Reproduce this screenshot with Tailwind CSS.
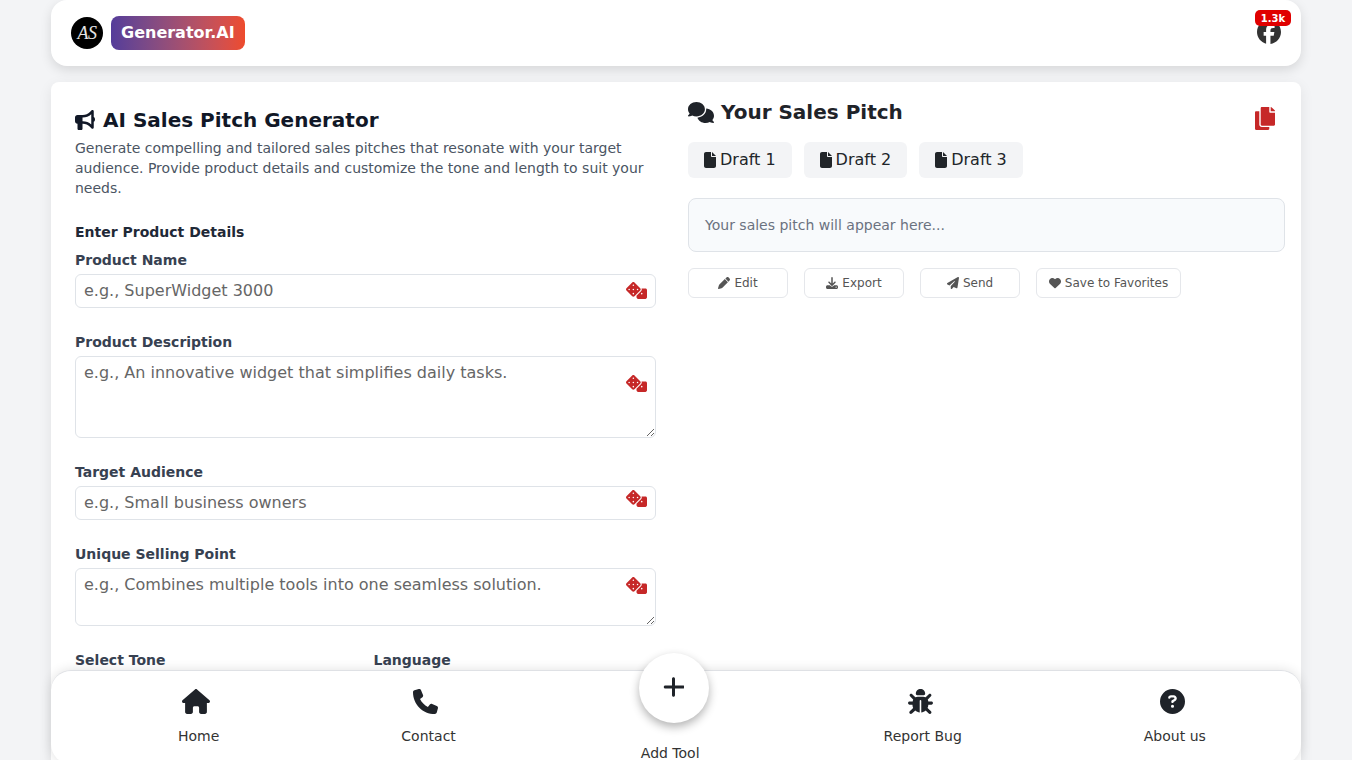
<!DOCTYPE html>
<html lang="en">
<head>
    <meta charset="UTF-8">
    <meta name="viewport" content="width=device-width, initial-scale=1.0">
    <title>AI Sales Pitch Generator</title>
    <script src="https://cdn.jsdelivr.net/npm/@tailwindcss/browser@4"></script>
</head>
<body class="bg-[#f3f4f6] font-['DejaVu_Sans',sans-serif] h-screen overflow-hidden relative">

    <!-- Header -->
    <header class="mx-[51px] h-[66px] bg-white rounded-2xl shadow-[0_4px_12px_rgba(0,0,0,0.12)] flex items-center justify-between pl-5 pr-2.5">
        <div class="flex items-center gap-2">
            <div class="w-8 h-8 rounded-full bg-black flex items-center justify-center text-white/90 italic text-[18px] tracking-tight font-['Liberation_Serif',serif]">AS</div>
            <div class="h-[34px] px-2.5 rounded-lg bg-gradient-to-r from-[#553c9a] to-[#ee4b2b] flex items-center text-white font-bold text-[16px]">Generator.AI</div>
        </div>
        <div class="relative w-9 h-6">
            <svg class="w-6 h-6 text-[#333] ml-[2px] -mt-px" viewBox="0 0 512 512" fill="currentColor"><path d="M512 256C512 114.6 397.4 0 256 0S0 114.6 0 256C0 376 82.7 476.8 194.2 504.5V334.2H141.4V256h52.8V222.3c0-87.1 39.4-127.5 125-127.5c16.2 0 44.2 3.2 55.7 6.4V172c-6-.6-16.5-1-29.6-1c-42 0-58.2 15.9-58.2 57.2V256h83.6l-14.4 78.2H287V510.1C413.8 494.8 512 386.9 512 256h0z"/></svg>
            <span class="absolute left-0 top-[-11px] w-9 h-4 rounded-[5px] bg-[#e00000] text-white text-[10px] font-bold flex items-center justify-center">1.3k</span>
        </div>
    </header>

    <!-- Main card -->
    <main class="mx-[51px] mt-4 h-[900px] bg-white rounded-lg shadow-[0_4px_14px_rgba(0,0,0,0.08)] p-6 grid grid-cols-[581px_597px] gap-x-8 items-start">
        <section>
            <h1 class="flex items-center gap-2 text-xl leading-7 font-bold text-[#111827] mb-1">
                <svg class="w-5 h-5" viewBox="0 0 512 512" fill="currentColor"><path d="M480 32c0-12.9-7.8-24.6-19.8-29.6s-25.7-2.2-34.9 6.9L381.7 53c-48 48-113.1 75-181 75H192 160 64c-35.3 0-64 28.7-64 64v96c0 35.3 28.7 64 64 64l0 128c0 17.7 14.3 32 32 32h64c17.7 0 32-14.3 32-32V352h8.7c67.9 0 133 27 181 75l43.6 43.6c9.2 9.2 22.9 11.9 34.9 6.9s19.8-16.6 19.8-29.6V300.4c18.6-8.8 32-32.5 32-60.4s-13.4-51.6-32-60.4V32zm-64 76.7V240 371.3C357.2 317.8 280.5 288 200.7 288H192V192h8.7c79.8 0 156.5-29.8 215.3-83.3z"/></svg>
                AI Sales Pitch Generator
            </h1>
            <p class="text-sm leading-5 text-[#4b5563] mb-6">Generate compelling and tailored sales pitches that resonate with your target audience. Provide product details and customize the tone and length to suit your needs.</p>

            <h2 class="text-sm leading-5 font-bold text-[#1f2937] mb-2">Enter Product Details</h2>

            <div class="mb-6">
                <label class="block text-sm leading-5 font-bold text-[#374151] mb-1">Product Name</label>
                <div class="relative">
                    <input type="text" placeholder="e.g., SuperWidget 3000" class="block w-full h-[34px] px-2 pb-0.5 text-base border border-[#dfe3e8] rounded-md placeholder:text-[#666]">
                    <svg class="absolute right-[9px] top-[8px] w-[21px] h-[17px] text-[#c62828]" viewBox="0 0 640 512" fill="currentColor"><path d="M592 192H473.26c12.69 29.59 7.12 65.2-17 89.32L320 417.58V464c0 26.51 21.49 48 48 48h224c26.51 0 48-21.49 48-48V240c0-26.51-21.49-48-48-48zM480 376c-13.25 0-24-10.75-24-24 0-13.26 10.75-24 24-24s24 10.74 24 24c0 13.25-10.75 24-24 24zm-46.37-186.7L258.7 14.37c-19.16-19.16-50.23-19.16-69.39 0L14.37 189.3c-19.16 19.16-19.16 50.23 0 69.39L189.3 433.63c19.16 19.16 50.23 19.16 69.39 0L433.63 258.7c19.17-19.17 19.17-50.24 0-69.4zM96 248c-13.25 0-24-10.75-24-24 0-13.26 10.75-24 24-24s24 10.74 24 24c0 13.25-10.75 24-24 24zm128 128c-13.25 0-24-10.75-24-24 0-13.26 10.75-24 24-24s24 10.74 24 24c0 13.25-10.75 24-24 24zm0-128c-13.25 0-24-10.75-24-24 0-13.26 10.75-24 24-24s24 10.74 24 24c0 13.25-10.75 24-24 24zm0-128c-13.25 0-24-10.75-24-24 0-13.26 10.75-24 24-24s24 10.74 24 24c0 13.25-10.75 24-24 24zm128 128c-13.25 0-24-10.75-24-24 0-13.26 10.75-24 24-24s24 10.74 24 24c0 13.25-10.75 24-24 24z"/></svg>
                </div>
            </div>

            <div class="mb-6">
                <label class="block text-sm leading-5 font-bold text-[#374151] mb-1">Product Description</label>
                <div class="relative">
                    <textarea placeholder="e.g., An innovative widget that simplifies daily tasks." class="block w-full h-[82px] px-2 py-1 text-base border border-[#dfe3e8] rounded-md placeholder:text-[#666]"></textarea>
                    <svg class="absolute right-[9px] top-[19px] w-[21px] h-[17px] text-[#c62828]" viewBox="0 0 640 512" fill="currentColor"><path d="M592 192H473.26c12.69 29.59 7.12 65.2-17 89.32L320 417.58V464c0 26.51 21.49 48 48 48h224c26.51 0 48-21.49 48-48V240c0-26.51-21.49-48-48-48zM480 376c-13.25 0-24-10.75-24-24 0-13.26 10.75-24 24-24s24 10.74 24 24c0 13.25-10.75 24-24 24zm-46.37-186.7L258.7 14.37c-19.16-19.16-50.23-19.16-69.39 0L14.37 189.3c-19.16 19.16-19.16 50.23 0 69.39L189.3 433.63c19.16 19.16 50.23 19.16 69.39 0L433.63 258.7c19.17-19.17 19.17-50.24 0-69.4zM96 248c-13.25 0-24-10.75-24-24 0-13.26 10.75-24 24-24s24 10.74 24 24c0 13.25-10.75 24-24 24zm128 128c-13.25 0-24-10.75-24-24 0-13.26 10.75-24 24-24s24 10.74 24 24c0 13.25-10.75 24-24 24zm0-128c-13.25 0-24-10.75-24-24 0-13.26 10.75-24 24-24s24 10.74 24 24c0 13.25-10.75 24-24 24zm0-128c-13.25 0-24-10.75-24-24 0-13.26 10.75-24 24-24s24 10.74 24 24c0 13.25-10.75 24-24 24zm128 128c-13.25 0-24-10.75-24-24 0-13.26 10.75-24 24-24s24 10.74 24 24c0 13.25-10.75 24-24 24z"/></svg>
                </div>
            </div>

            <div class="mb-6">
                <label class="block text-sm leading-5 font-bold text-[#374151] mb-1">Target Audience</label>
                <div class="relative">
                    <input type="text" placeholder="e.g., Small business owners" class="block w-full h-[34px] px-2 pb-0.5 text-base border border-[#dfe3e8] rounded-md placeholder:text-[#666]">
                    <svg class="absolute right-[9px] top-[4px] w-[21px] h-[17px] text-[#c62828]" viewBox="0 0 640 512" fill="currentColor"><path d="M592 192H473.26c12.69 29.59 7.12 65.2-17 89.32L320 417.58V464c0 26.51 21.49 48 48 48h224c26.51 0 48-21.49 48-48V240c0-26.51-21.49-48-48-48zM480 376c-13.25 0-24-10.75-24-24 0-13.26 10.75-24 24-24s24 10.74 24 24c0 13.25-10.75 24-24 24zm-46.37-186.7L258.7 14.37c-19.16-19.16-50.23-19.16-69.39 0L14.37 189.3c-19.16 19.16-19.16 50.23 0 69.39L189.3 433.63c19.16 19.16 50.23 19.16 69.39 0L433.63 258.7c19.17-19.17 19.17-50.24 0-69.4zM96 248c-13.25 0-24-10.75-24-24 0-13.26 10.75-24 24-24s24 10.74 24 24c0 13.25-10.75 24-24 24zm128 128c-13.25 0-24-10.75-24-24 0-13.26 10.75-24 24-24s24 10.74 24 24c0 13.25-10.75 24-24 24zm0-128c-13.25 0-24-10.75-24-24 0-13.26 10.75-24 24-24s24 10.74 24 24c0 13.25-10.75 24-24 24zm0-128c-13.25 0-24-10.75-24-24 0-13.26 10.75-24 24-24s24 10.74 24 24c0 13.25-10.75 24-24 24zm128 128c-13.25 0-24-10.75-24-24 0-13.26 10.75-24 24-24s24 10.74 24 24c0 13.25-10.75 24-24 24z"/></svg>
                </div>
            </div>

            <div class="mb-6">
                <label class="block text-sm leading-5 font-bold text-[#374151] mb-1">Unique Selling Point</label>
                <div class="relative">
                    <textarea placeholder="e.g., Combines multiple tools into one seamless solution." class="block w-full h-[58px] px-2 py-1 text-base border border-[#dfe3e8] rounded-md placeholder:text-[#666]"></textarea>
                    <svg class="absolute right-[9px] top-[9px] w-[21px] h-[17px] text-[#c62828]" viewBox="0 0 640 512" fill="currentColor"><path d="M592 192H473.26c12.69 29.59 7.12 65.2-17 89.32L320 417.58V464c0 26.51 21.49 48 48 48h224c26.51 0 48-21.49 48-48V240c0-26.51-21.49-48-48-48zM480 376c-13.25 0-24-10.75-24-24 0-13.26 10.75-24 24-24s24 10.74 24 24c0 13.25-10.75 24-24 24zm-46.37-186.7L258.7 14.37c-19.16-19.16-50.23-19.16-69.39 0L14.37 189.3c-19.16 19.16-19.16 50.23 0 69.39L189.3 433.63c19.16 19.16 50.23 19.16 69.39 0L433.63 258.7c19.17-19.17 19.17-50.24 0-69.4zM96 248c-13.25 0-24-10.75-24-24 0-13.26 10.75-24 24-24s24 10.74 24 24c0 13.25-10.75 24-24 24zm128 128c-13.25 0-24-10.75-24-24 0-13.26 10.75-24 24-24s24 10.74 24 24c0 13.25-10.75 24-24 24zm0-128c-13.25 0-24-10.75-24-24 0-13.26 10.75-24 24-24s24 10.74 24 24c0 13.25-10.75 24-24 24zm0-128c-13.25 0-24-10.75-24-24 0-13.26 10.75-24 24-24s24 10.74 24 24c0 13.25-10.75 24-24 24zm128 128c-13.25 0-24-10.75-24-24 0-13.26 10.75-24 24-24s24 10.74 24 24c0 13.25-10.75 24-24 24z"/></svg>
                </div>
            </div>

            <div class="grid grid-cols-2 gap-x-4">
                <label class="block text-sm leading-5 font-bold text-[#374151]">Select Tone</label>
                <label class="block text-sm leading-5 font-bold text-[#374151]">Language</label>
            </div>
        </section>

        <section class="-mt-2">
            <div class="flex items-start justify-between h-7 mb-4">
                <h2 class="flex items-center gap-[7px] text-xl leading-7 font-bold text-[#1f2329]">
                    <svg class="w-[26px] h-[21px]" viewBox="0 0 640 512" fill="currentColor"><path d="M208 352c114.9 0 208-78.8 208-176S322.9 0 208 0S0 78.8 0 176c0 38.6 14.7 74.3 39.6 103.4c-3.5 9.4-8.7 17.7-14.2 24.7c-4.8 6.2-9.7 11-13.3 14.3c-1.8 1.6-3.3 2.9-4.3 3.7c-.5 .4-.9 .7-1.1 .8l-.2 .2 0 0 0 0C1 327.2-1.4 334.4 .8 340.9S9.1 352 16 352c21.8 0 43.8-5.6 62.1-12.5c9.2-3.5 17.8-7.4 25.3-11.4C134.1 343.3 169.8 352 208 352zM448 176c0 112.3-99.1 196.9-216.5 207C255.8 457.4 336.4 512 432 512c38.2 0 73.9-8.7 104.7-23.9c7.5 4 16 7.9 25.2 11.4c18.3 6.9 40.3 12.5 62.1 12.5c6.9 0 13.1-4.5 15.2-11.1c2.1-6.6-.2-13.8-5.8-17.9l0 0 0 0-.2-.2c-.2-.2-.6-.4-1.1-.8c-1-.8-2.5-2-4.3-3.7c-3.6-3.3-8.5-8.1-13.3-14.3c-5.5-7-10.7-15.4-14.2-24.7c24.9-29 39.6-64.7 39.6-103.4c0-92.8-84.9-168.9-192.6-175.5c.4 5.1 .6 10.3 .6 15.5z"/></svg>
                    Your Sales Pitch
                </h2>
                <svg class="w-5 h-[23px] mt-[9px] mr-[10px] text-[#c62828]" viewBox="0 0 448 512" fill="currentColor"><path d="M320 448v40c0 13.255-10.745 24-24 24H24c-13.255 0-24-10.745-24-24V120c0-13.255 10.745-24 24-24h72v296c0 30.879 25.121 56 56 56h168zm0-344V0H152c-13.255 0-24 10.745-24 24v368c0 13.255 10.745 24 24 24h272c13.255 0 24-10.745 24-24V128H344c-13.2 0-24-10.8-24-24zm120.971-31.029L375.029 7.029A24 24 0 0 0 358.059 0H352v96h96v-6.059a24 24 0 0 0-7.029-16.97z"/></svg>
            </div>

            <div class="flex gap-3 mb-5">
                <button class="h-9 px-4 rounded-md bg-[#f3f4f6] flex items-center gap-1 text-base text-[#212529]">
                    <svg class="w-3 h-4" viewBox="0 0 384 512" fill="currentColor"><path d="M0 64C0 28.7 28.7 0 64 0H224V128c0 17.7 14.3 32 32 32H384V448c0 35.3-28.7 64-64 64H64c-35.3 0-64-28.7-64-64V64zm384 64H256V0L384 128z"/></svg>
                    Draft 1
                </button>
                <button class="h-9 px-4 rounded-md bg-[#f3f4f6] flex items-center gap-1 text-base text-[#212529]">
                    <svg class="w-3 h-4" viewBox="0 0 384 512" fill="currentColor"><path d="M0 64C0 28.7 28.7 0 64 0H224V128c0 17.7 14.3 32 32 32H384V448c0 35.3-28.7 64-64 64H64c-35.3 0-64-28.7-64-64V64zm384 64H256V0L384 128z"/></svg>
                    Draft 2
                </button>
                <button class="h-9 px-4 rounded-md bg-[#f3f4f6] flex items-center gap-1 text-base text-[#212529]">
                    <svg class="w-3 h-4" viewBox="0 0 384 512" fill="currentColor"><path d="M0 64C0 28.7 28.7 0 64 0H224V128c0 17.7 14.3 32 32 32H384V448c0 35.3-28.7 64-64 64H64c-35.3 0-64-28.7-64-64V64zm384 64H256V0L384 128z"/></svg>
                    Draft 3
                </button>
            </div>

            <div class="h-[54px] px-4 flex items-center bg-[#f8fafc] border border-[#dfe3e8] rounded-lg text-sm text-[#6b7280] mb-4">Your sales pitch will appear here...</div>

            <div class="flex gap-4">
                <button class="w-[100px] h-[30px] rounded-md border border-[#e5e7eb] flex items-center justify-center gap-1 text-xs text-[#555]">
                    <svg class="w-3 h-3" viewBox="0 0 512 512" fill="currentColor"><path d="M362.7 19.3L314.3 67.7 444.3 197.7l48.4-48.4c25-25 25-65.5 0-90.5L453.3 19.3c-25-25-65.5-25-90.5 0zm-71 71L58.6 323.5c-10.4 10.4-18 23.3-22.2 37.4L1 481.2C-1.5 489.7 .8 498.8 7 505s15.3 8.5 23.7 6.1l120.3-35.4c14.1-4.2 27-11.8 37.4-22.2L421.7 220.3 291.7 90.3z"/></svg>
                    Edit
                </button>
                <button class="w-[100px] h-[30px] rounded-md border border-[#e5e7eb] flex items-center justify-center gap-1 text-xs text-[#555]">
                    <svg class="w-3 h-3" viewBox="0 0 512 512" fill="currentColor"><path d="M288 32c0-17.7-14.3-32-32-32s-32 14.3-32 32V274.7l-73.4-73.4c-12.5-12.5-32.8-12.5-45.3 0s-12.5 32.8 0 45.3l128 128c12.5 12.5 32.8 12.5 45.3 0l128-128c12.5-12.5 12.5-32.8 0-45.3s-32.8-12.5-45.3 0L288 274.7V32zM64 352c-35.3 0-64 28.7-64 64v32c0 35.3 28.7 64 64 64H448c35.3 0 64-28.7 64-64V416c0-35.3-28.7-64-64-64H346.5l-45.3 45.3c-25 25-65.5 25-90.5 0L165.5 352H64zm368 56a24 24 0 1 1 0 48 24 24 0 1 1 0-48z"/></svg>
                    Export
                </button>
                <button class="w-[100px] h-[30px] rounded-md border border-[#e5e7eb] flex items-center justify-center gap-1 text-xs text-[#555]">
                    <svg class="w-3 h-3" viewBox="0 0 512 512" fill="currentColor"><path d="M498.1 5.6c10.1 7 15.4 19.1 13.5 31.2l-64 416c-1.5 9.7-7.4 18.2-16 23s-18.9 5.4-28 1.6L284 427.7l-68.5 74.1c-8.9 9.7-22.9 12.9-35.2 8.1S160 493.2 160 480V396.4c0-4 1.5-7.8 4.2-10.7L331.8 202.8c5.8-6.3 5.6-16-.4-22s-15.7-6.4-22-.7L106 360.8 17.7 316.6C7.1 311.3 .3 300.7 0 288.9s5.9-22.8 16.1-28.7l448-256c10.7-6.1 23.9-5.5 34 1.4z"/></svg>
                    Send
                </button>
                <button class="w-[145px] h-[30px] rounded-md border border-[#e5e7eb] flex items-center justify-center gap-1 text-xs text-[#555]">
                    <svg class="w-3 h-3" viewBox="0 0 512 512" fill="currentColor"><path d="M47.6 300.4L228.3 469.1c7.5 7 17.4 10.9 27.7 10.9s20.2-3.9 27.7-10.9L464.4 300.4c30.4-28.3 47.6-68 47.6-109.5v-5.8c0-69.9-50.5-129.5-119.4-141C347 36.5 300.6 51.4 268 84L256 96 244 84c-32.6-32.6-79-47.5-124.6-39.9C50.5 55.6 0 115.2 0 185.1v5.8c0 41.5 17.2 81.2 47.6 109.5z"/></svg>
                    Save to Favorites
                </button>
            </div>
        </section>
    </main>

    <!-- Bottom nav lies over the form -->
    <nav class="absolute left-[51px] right-[51px] bottom-[-4px] h-[94px] bg-white border-t border-[#dfe1e5] rounded-[20px] shadow-[0_0_12px_rgba(0,0,0,0.12)] flex pl-[127px] gap-[182px] text-sm leading-5 text-[#333]">
        <a class="flex flex-col items-center pt-[18px]">
            <svg class="w-7 h-[25px] mr-1.5 text-[#1f2329]" viewBox="0 0 576 512" fill="currentColor"><path d="M575.8 255.5c0 18-15 32.1-32 32.1h-32l.7 160.2c0 2.7-.2 5.4-.5 8.1V472c0 22.1-17.9 40-40 40H456c-1.1 0-2.2 0-3.3-.1c-1.4 .1-2.8 .1-4.2 .1H416 392c-22.1 0-40-17.9-40-40V448 384c0-17.7-14.3-32-32-32H256c-17.7 0-32 14.3-32 32v64 24c0 22.1-17.9 40-40 40H160 128.1c-1.5 0-3-.1-4.5-.2c-1.2 .1-2.4 .2-3.6 .2H104c-22.1 0-40-17.9-40-40V360c0-.9 0-1.9 .1-2.8V287.6H32c-18 0-32-14-32-32.1c0-9 3-17 10-24L266.4 8c7-7 15-8 22-8s15 2 21 7L564.8 231.5c8 7 12 15 11 24z"/></svg>
            <span class="mt-3">Home</span>
        </a>
        <a class="flex flex-col items-center pt-[18px]">
            <svg class="w-[25px] h-[25px] mr-1.5 text-[#1f2329]" viewBox="0 0 512 512" fill="currentColor"><path d="M164.9 24.6c-7.7-18.6-28-28.5-47.4-23.2l-88 24C12.1 30.2 0 46 0 64C0 311.4 200.6 512 448 512c18 0 33.8-12.1 38.6-29.5l24-88c5.3-19.4-4.6-39.7-23.2-47.4l-96-40c-16.3-6.8-35.2-2.1-46.3 11.6L304.7 368C234.3 334.7 177.3 277.7 144 207.3L193.3 167c13.7-11.2 18.4-30 11.6-46.3l-40-96z"/></svg>
            <span class="mt-3">Contact</span>
        </a>
        <a class="relative flex flex-col items-center pt-[72px] ml-[3px]">
            <span class="absolute left-[-2px] top-[-18px] w-[70px] h-[70px] rounded-full bg-white shadow-[0_4px_10px_rgba(0,0,0,0.3)] flex items-center justify-center text-[#1f2329]">
                <svg class="w-[21px] h-6 -mt-0.5" viewBox="0 0 448 512" fill="currentColor"><path d="M256 80c0-17.7-14.3-32-32-32s-32 14.3-32 32V224H48c-17.7 0-32 14.3-32 32s14.3 32 32 32H192V432c0 17.7 14.3 32 32 32s32-14.3 32-32V288H432c17.7 0 32-14.3 32-32s-14.3-32-32-32H256V80z"/></svg>
            </span>
            <span>Add Tool</span>
        </a>
        <a class="flex flex-col items-center pt-[18px] ml-0.5">
            <svg class="w-[25px] h-[25px] mr-1 text-[#1f2329]" viewBox="0 0 512 512" fill="currentColor"><path d="M256 0c53 0 96 43 96 96v3.6c0 15.7-12.7 28.4-28.4 28.4H188.4c-15.7 0-28.4-12.7-28.4-28.4V96c0-53 43-96 96-96zM41.4 105.4c12.5-12.5 32.8-12.5 45.3 0l64 64c.7 .7 1.3 1.4 1.9 2.1c14.2-7.3 30.4-11.4 47.5-11.4H312c17.1 0 33.2 4.1 47.5 11.4c.6-.7 1.2-1.4 1.9-2.1l64-64c12.5-12.5 32.8-12.5 45.3 0s12.5 32.8 0 45.3l-64 64c-.7 .7-1.4 1.3-2.1 1.9c6.2 12 10.1 25.3 11.1 39.5H480c17.7 0 32 14.3 32 32s-14.3 32-32 32H416c0 24.6-5.5 47.8-15.4 68.6c2.2 1.3 4.2 2.9 6 4.8l64 64c12.5 12.5 12.5 32.8 0 45.3s-32.8 12.5-45.3 0l-63.1-63.1c-24.5 21.8-55.8 36.2-90.3 39.6V240c0-8.8-7.2-16-16-16s-16 7.2-16 16V479.2c-34.5-3.4-65.8-17.8-90.3-39.6L81.4 502.6c-12.5 12.5-32.8 12.5-45.3 0s-12.5-32.8 0-45.3l64-64c1.9-1.9 3.9-3.4 6-4.8C96.5 367.8 91 344.6 91 320H32c-17.7 0-32-14.3-32-32s14.3-32 32-32H96.3c1.1-14.1 5-27.5 11.1-39.5c-.7-.6-1.4-1.2-2.1-1.9l-64-64c-12.5-12.5-12.5-32.8 0-45.3z"/></svg>
            <span class="mt-3">Report Bug</span>
        </a>
        <a class="flex flex-col items-center pt-[18px]">
            <svg class="w-[25px] h-[25px] mr-1 text-[#1f2329]" viewBox="0 0 512 512" fill="currentColor"><path d="M256 512A256 256 0 1 0 256 0a256 256 0 1 0 0 512zM169.8 165.3c7.9-22.3 29.1-37.3 52.8-37.3h58.3c34.9 0 63.1 28.3 63.1 63.1c0 22.6-12.1 43.5-31.7 54.8L280 264.4c-.2 13-10.9 23.6-24 23.6c-13.3 0-24-10.7-24-24V250.5c0-8.6 4.6-16.5 12.1-20.8l44.3-25.4c4.7-2.7 7.6-7.7 7.6-13.1c0-8.4-6.8-15.1-15.1-15.1H222.6c-3.4 0-6.4 2.1-7.5 5.3l-.4 1.2c-4.4 12.5-18.2 19-30.6 14.6s-19-18.2-14.6-30.6l.4-1.2zM224 352a32 32 0 1 1 64 0 32 32 0 1 1 -64 0z"/></svg>
            <span class="mt-3">About us</span>
        </a>
    </nav>

</body>
</html>
